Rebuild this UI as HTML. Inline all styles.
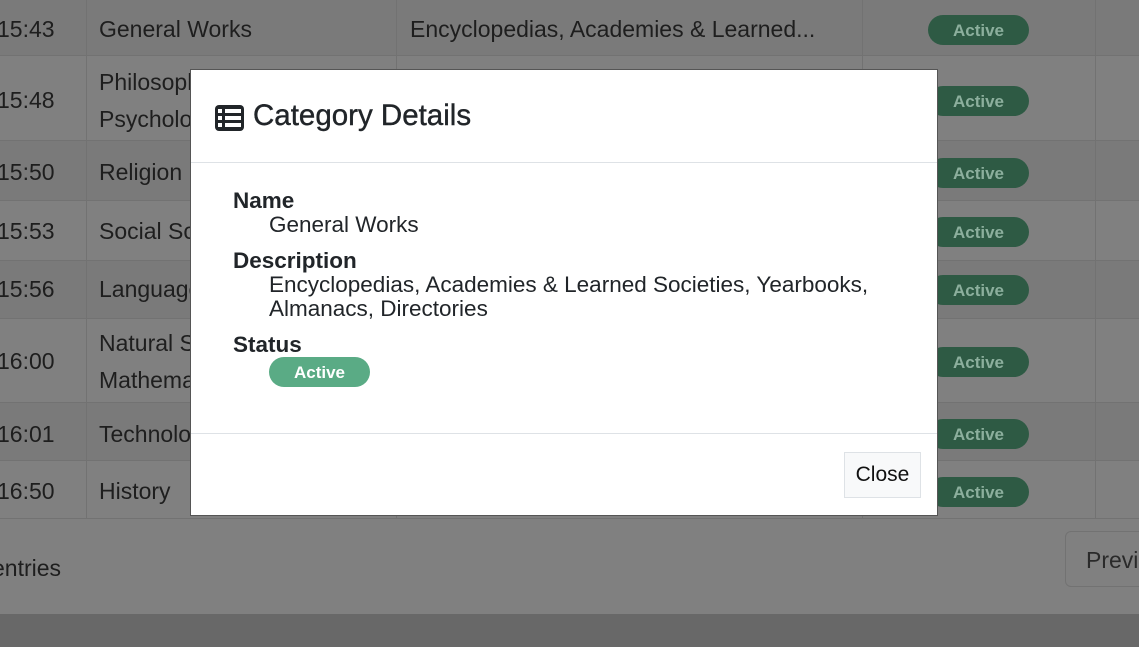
<!DOCTYPE html>
<html><head><meta charset="utf-8"><style>
*{margin:0;padding:0;box-sizing:border-box}
body{width:1139px;height:647px;overflow:hidden;background:#808080;font-family:"Liberation Sans",sans-serif;position:relative;color:#1c1c1c}
.row{position:absolute;left:0;width:1139px;border-bottom:1px solid #727272}
.row.s{background:#7a7a7a}.row.e{background:#808080}
.vl{position:absolute;top:0;width:1px;height:518px;background:#727272}
.t{position:absolute;font-size:23px;color:#1e1e1e;line-height:37px}
.b{position:absolute;left:928px;width:101px;height:30px;border-radius:15px;background:#2e5a44;color:#8caf9d;font-weight:bold;font-size:17px;text-align:center;line-height:32px}
.modal{position:absolute;left:190px;top:69px;width:748px;height:447px;background:#fff;border:1px solid #555}
</style></head><body>
<div class="row s" style="top:0;height:56px"></div>
<div class="row e" style="top:56px;height:85px"></div>
<div class="row s" style="top:141px;height:60px"></div>
<div class="row e" style="top:201px;height:60px"></div>
<div class="row s" style="top:261px;height:58px"></div>
<div class="row e" style="top:319px;height:84px"></div>
<div class="row s" style="top:403px;height:58px"></div>
<div class="row e" style="top:461px;height:58px"></div>
<div class="vl" style="left:86px"></div><div class="vl" style="left:396px"></div><div class="vl" style="left:862px"></div><div class="vl" style="left:1095px"></div>
<div class="t" style="left:-3px;top:11px">15:43</div><div class="t" style="left:99px;top:11px">General Works</div><div class="t" style="left:410px;top:11px">Encyclopedias, Academies &amp; Learned...</div>
<div class="t" style="left:-3px;top:82px">15:48</div><div class="t" style="left:99px;top:64px">Philosophy &amp;<br>Psychology</div>
<div class="t" style="left:-3px;top:154px">15:50</div><div class="t" style="left:99px;top:154px">Religion</div>
<div class="t" style="left:-3px;top:213px">15:53</div><div class="t" style="left:99px;top:213px">Social Sciences</div>
<div class="t" style="left:-3px;top:271px">15:56</div><div class="t" style="left:99px;top:271px">Language</div>
<div class="t" style="left:-3px;top:343px">16:00</div><div class="t" style="left:99px;top:325px">Natural Sciences &amp;<br>Mathematics</div>
<div class="t" style="left:-3px;top:416px">16:01</div><div class="t" style="left:99px;top:416px">Technology</div>
<div class="t" style="left:-3px;top:473px">16:50</div><div class="t" style="left:99px;top:473px">History</div>
<div class="b" style="top:15px">Active</div><div class="b" style="top:86px">Active</div><div class="b" style="top:158px">Active</div><div class="b" style="top:217px">Active</div><div class="b" style="top:275px">Active</div><div class="b" style="top:347px">Active</div><div class="b" style="top:419px">Active</div><div class="b" style="top:477px">Active</div>
<div class="t" style="left:-8px;top:550px">entries</div>
<div style="position:absolute;left:1065px;top:531px;width:100px;height:56px;border:1px solid #727272;border-radius:6px;font-size:23px;color:#2a2a2a;padding:15px 0 0 20px">Previous</div>
<div style="position:absolute;left:0;top:614px;width:1139px;height:33px;background:#686868"></div>
<div class="modal">
 <svg style="position:absolute;left:24px;top:35px" width="29" height="26" viewBox="0 0 29 26"><rect x="0" y="0" width="29" height="26" rx="4" fill="#212529"/><rect x="3" y="4" width="4" height="4" fill="#fff"/><rect x="10" y="4" width="16" height="4" fill="#fff"/><rect x="3" y="11" width="4" height="4" fill="#fff"/><rect x="10" y="11" width="16" height="4" fill="#fff"/><rect x="3" y="18" width="4" height="4" fill="#fff"/><rect x="10" y="18" width="16" height="4" fill="#fff"/></svg>
 <div style="position:absolute;left:62px;top:29px;font-size:29.5px;color:#212529;-webkit-text-stroke:0.4px #212529">Category Details</div>
 <div style="position:absolute;left:0;top:92px;width:746px;height:1px;background:#dee2e6"></div>
 <div style="position:absolute;left:42px;top:119px;font-size:22.5px;color:#212529;line-height:24px">
  <div style="font-weight:bold">Name</div>
  <div style="padding-left:36px">General Works</div>
  <div style="font-weight:bold;margin-top:12px">Description</div>
  <div style="padding-left:36px">Encyclopedias, Academies &amp; Learned Societies, Yearbooks,<br>Almanacs, Directories</div>
  <div style="font-weight:bold;margin-top:12px">Status</div>
  <div style="margin-left:36px;width:101px;height:30px;border-radius:15px;background:#5aab85;color:#fff;font-weight:bold;font-size:17px;text-align:center;line-height:31px">Active</div>
 </div>
 <div style="position:absolute;left:0;top:363px;width:746px;height:1px;background:#dee2e6"></div>
 <div style="position:absolute;left:653px;top:382px;width:77px;height:46px;background:#f8f9fa;border:1px solid #dee2e6;font-size:21px;text-align:center;line-height:44px;color:#111">Close</div>
</div>
</body></html>
